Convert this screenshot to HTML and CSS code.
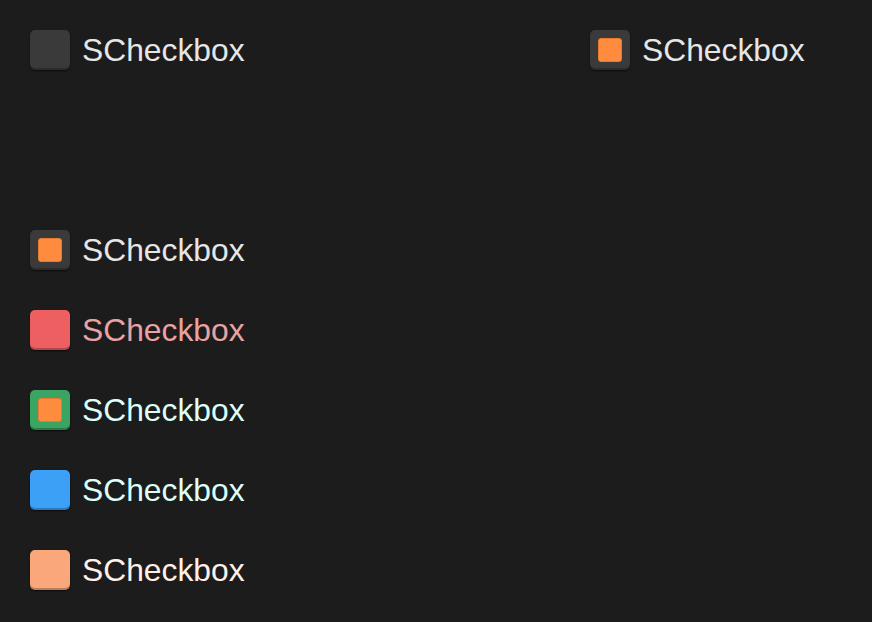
FILE: index.html
```html
<!DOCTYPE html>
<html>
<head>
<meta charset="utf-8">
<link rel="stylesheet" href="styles.css">
</head>
<body>
<div class="page">
  <div class="top-row">
    <label class="cb first"><span class="box"></span><span class="label">SCheckbox</span></label>
    <label class="cb"><span class="box checked"><span class="mark"></span></span><span class="label">SCheckbox</span></label>
  </div>
  <div class="list">
    <label class="cb"><span class="box checked"><span class="mark"></span></span><span class="label">SCheckbox</span></label>
    <label class="cb red"><span class="box"></span><span class="label">SCheckbox</span></label>
    <label class="cb green"><span class="box checked"><span class="mark"></span></span><span class="label">SCheckbox</span></label>
    <label class="cb blue"><span class="box"></span><span class="label">SCheckbox</span></label>
    <label class="cb orange"><span class="box"></span><span class="label">SCheckbox</span></label>
  </div>
</div>
</body>
</html>
```
FILE: styles.css
```css
html, body {
  margin: 0;
  padding: 0;
  background: #1c1c1c;
  width: 872px;
  height: 622px;
  overflow: hidden;
}
.page {
  padding: 30px;
  font-family: "Liberation Sans", Arial, sans-serif;
}
.top-row {
  display: flex;
}
.top-row .first {
  width: 560px;
  flex-shrink: 0;
}
.list {
  margin-top: 160px;
  display: flex;
  flex-direction: column;
  align-items: flex-start;
  gap: 40px;
}
.cb {
  display: flex;
  align-items: center;
  height: 40px;
  gap: 12px;
}
.box {
  width: 40px;
  height: 40px;
  box-sizing: border-box;
  border-radius: 5px;
  background: #3a3a3a;
  box-shadow: inset 0 -2px 0 rgba(0,0,0,0.25), 0 1px 2px rgba(0,0,0,0.6);
  display: flex;
  align-items: center;
  justify-content: center;
  flex-shrink: 0;
}
.mark {
  width: 24px;
  height: 24px;
  box-sizing: border-box;
  border-radius: 3px;
  background: #ff8c3e;
  border: 1px solid #e57a30;
}
.label {
  font-size: 31.8px;
  color: #e6e6e6;
  line-height: 40px;
}
.red .box { background: #ee5f61; }
.red .label { color: #e9a3a3; }
.green .box { background: #3aa563; }
.green .label { color: #ddfff8; }
.blue .box { background: #3ba0f6; }
.blue .label { color: #ddfff8; }
.orange .box { background: #f9a77b; }
.orange .label { color: #fff1e8; }
```
